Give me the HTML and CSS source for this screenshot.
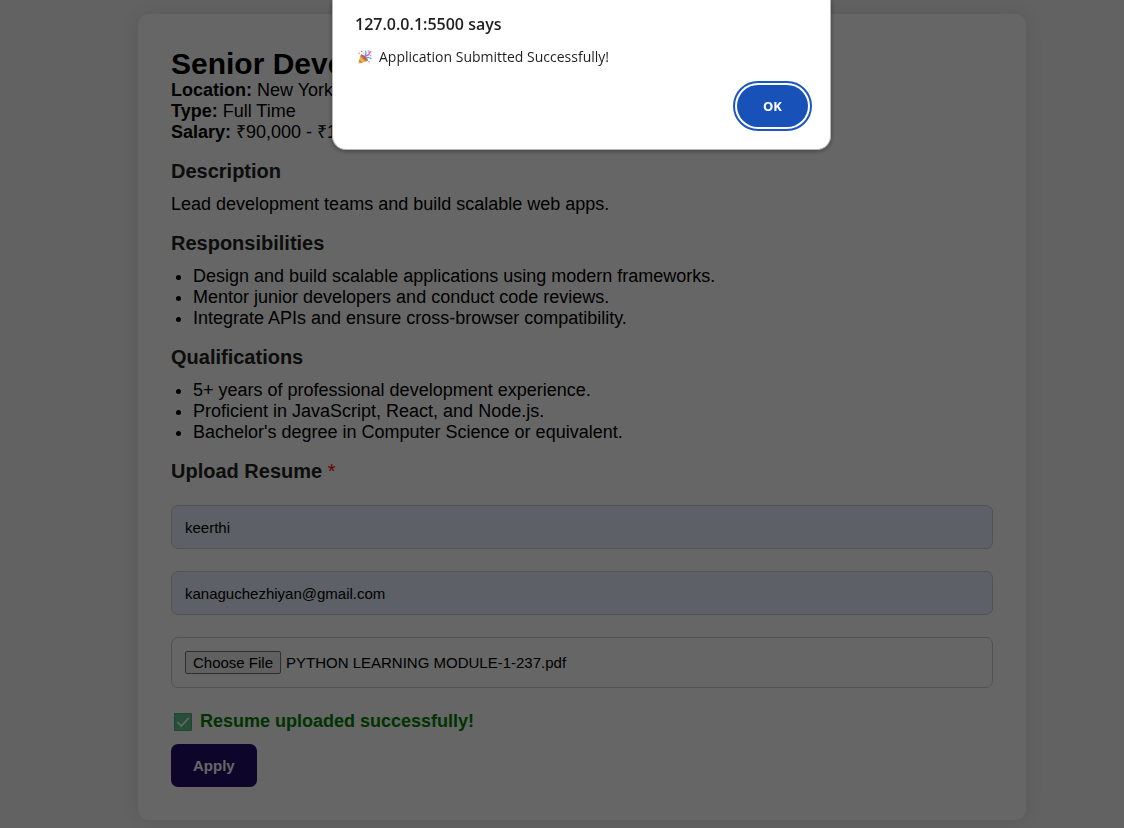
FILE: index.html
```html
<!DOCTYPE html>
<html lang="en">
<head>
<meta charset="utf-8">
<meta name="viewport" content="width=device-width, initial-scale=1">
<title>Senior Developer</title>
<link rel="stylesheet" href="styles.css">
</head>
<body>
<main class="job-card">
  <h1 class="job-title">Senior Developer</h1>
  <p><strong>Location:</strong> New York</p>
  <p><strong>Type:</strong> Full Time</p>
  <p><strong>Salary:</strong> ₹90,000 - ₹120,000</p>

  <h2 class="section-title">Description</h2>
  <p>Lead development teams and build scalable web apps.</p>

  <h2 class="section-title">Responsibilities</h2>
  <ul class="job-list">
    <li>Design and build scalable applications using modern frameworks.</li>
    <li>Mentor junior developers and conduct code reviews.</li>
    <li>Integrate APIs and ensure cross-browser compatibility.</li>
  </ul>

  <h2 class="section-title">Qualifications</h2>
  <ul class="job-list">
    <li>5+ years of professional development experience.</li>
    <li>Proficient in JavaScript, React, and Node.js.</li>
    <li>Bachelor's degree in Computer Science or equivalent.</li>
  </ul>

  <h2 class="section-title">Upload Resume <span class="required">*</span></h2>
  <form class="apply-form">
    <input class="field" type="text" aria-label="Name" value="keerthi">
    <input class="field" type="email" aria-label="Email" value="kanaguchezhiyan@gmail.com">
    <label class="file-field">
      <input class="file-input" type="file" aria-label="Resume">
      <span>PYTHON LEARNING MODULE-1-237.pdf</span>
    </label>
    <div class="form-end">
      <p class="success">
        <svg class="check-icon" viewBox="0 0 18 18" aria-hidden="true">
          <rect width="18" height="18" rx="1" fill="#4fae7c"/>
          <rect x="1" y="1" width="16" height="16" fill="#5fc48f"/>
          <path d="M3.5 9.2l3.8 3.8 7.4-8" fill="none" stroke="#fff" stroke-width="1.7"/>
        </svg>
        <span>Resume uploaded successfully!</span>
      </p>
      <button class="apply-button" type="button">Apply</button>
    </div>
  </form>
</main>

<div class="backdrop">
  <section class="alert" role="alertdialog" aria-modal="true" aria-labelledby="alert-title" aria-describedby="alert-text">
    <h2 class="alert-title" id="alert-title">127.0.0.1:5500 says</h2>
    <p class="alert-message" id="alert-text">
      <svg class="party-icon" viewBox="0 0 14 14" aria-hidden="true">
        <path d="M2.8 4.6L.5 12.2q-.3 1.4 1 1.2l8.4-2.7q.6-1.4-2.4-4.1T2.8 4.6z" fill="#f2b04a"/>
        <path d="M2.3 6.3l4.9 5.3 1.8-.6-6-6.3zM1.3 9.5l3.2 3-1.5.5-2.1-2z" fill="#c98045"/>
        <path d="M3 4.5q1.3-.4 4 2t2.9 4.1q-1.8.3-4.4-2.3T3 4.5z" fill="#a8655a"/>
        <path d="M6.5 5.8Q9 4 7.3.8" fill="none" stroke="#4aa8ef" stroke-width="1.3"/>
        <path d="M8.2 8.4q1.8-2.2 5.2.5" fill="none" stroke="#4aa8ef" stroke-width="1.3"/>
        <path d="M7.5 7.1q.2-1.7 2-1.8t1.8-2 2-1.4" fill="none" stroke="#f04dad" stroke-width="1.5"/>
        <g fill="#f04dad"><circle cx="3.7" cy="1.5" r=".8"/><circle cx="1" cy="3.3" r=".7"/><circle cx="11" cy="11.8" r=".7"/></g>
        <g fill="#4aa8ef"><circle cx="10.3" cy="1" r=".7"/><circle cx="12.8" cy="5.8" r=".7"/></g>
        <circle cx="5.3" cy="3.3" r=".8" fill="#ffc83d"/>
      </svg>
      <span>Application Submitted Successfully!</span>
    </p>
    <button class="ok-button" type="button">OK</button>
  </section>
</div>
</body>
</html>
```
FILE: styles.css
```css
* {
  box-sizing: border-box;
}

body {
  margin: 0;
  padding: 14px 32px 8px 72px;
  background: #f5f5f5;
  color: #000;
  font-family: "Liberation Sans", Arial, sans-serif;
  font-size: 18px;
  line-height: 21px;
}

h1,
h2,
p,
ul {
  margin: 0;
}

.job-card {
  max-width: 888px;
  margin: 0 auto;
  padding: 33px;
  background: #fff;
  border-radius: 11px;
  box-shadow: 0 0 22px rgba(0, 0, 0, 0.1);
}

.job-title {
  font-size: 30px;
  line-height: 33px;
}

.section-title {
  margin: 17px 0 11px;
  color: #222;
  font-size: 20px;
  line-height: 23px;
}

.job-list {
  padding-left: 22px;
}

.required {
  color: red;
  font-weight: normal;
}

.apply-form {
  display: flex;
  flex-direction: column;
  gap: 22px;
  margin-top: 22px;
}

.field,
.file-field {
  width: 100%;
  padding: 13px;
  border: 1px solid #ccc;
  border-radius: 7px;
  font-family: inherit;
  font-size: 15px;
}

.field {
  height: 44px;
  background: #e8f0fe;
  color: #000;
}

.file-field {
  display: flex;
  align-items: center;
  gap: 5px;
}

.file-input {
  width: 96px;
  overflow: hidden;
  font: inherit;
}

.file-input::file-selector-button {
  width: 96px;
  height: 23px;
  margin: 0;
  padding: 0;
  border: 1px solid #767676;
  border-radius: 2px;
  background: #efefef;
  color: #000;
  font: inherit;
}

.success {
  display: flex;
  align-items: center;
  gap: 8px;
  padding: 1px 0 0 3px;
  color: green;
  font-weight: bold;
}

.check-icon {
  width: 18px;
  height: 18px;
}

.apply-button {
  margin-top: 12px;
  padding: 11px 22px;
  border: 0;
  border-radius: 7px;
  background: #240d6b;
  color: #fff;
  font-family: inherit;
  font-size: 15px;
  font-weight: bold;
  line-height: 21px;
}

.backdrop {
  position: fixed;
  inset: 0;
  display: flex;
  align-items: flex-start;
  justify-content: center;
  padding-left: 39px;
  background: rgba(0, 0, 0, 0.6);
}

.alert {
  display: flex;
  flex-direction: column;
  width: 100%;
  max-width: 499px;
  padding: 12px 22px 22px;
  border: 1px solid #b5b8b7;
  border-top: 0;
  border-radius: 0 0 14px 14px;
  background: #fff;
  box-shadow: 0 1px 5px rgba(0, 0, 0, 0.4);
  color: #1f1f1f;
  font-family: "Open Sans", "Noto Sans", sans-serif;
}

.alert-title {
  font-size: 16px;
  font-weight: 600;
  line-height: 24px;
}

.alert-message {
  display: flex;
  align-items: center;
  gap: 7px;
  margin: 11px 0 18px;
  padding-left: 3px;
  font-size: 14px;
  line-height: 20px;
}

.party-icon {
  width: 14px;
  height: 14px;
}

.ok-button {
  align-self: flex-end;
  width: 71px;
  height: 42px;
  border: 0;
  border-radius: 21px;
  outline: 2px solid #1a56c4;
  outline-offset: 2px;
  background: #1851b8;
  color: #fff;
  font: 700 13px "Open Sans", "Noto Sans", sans-serif;
}
```
